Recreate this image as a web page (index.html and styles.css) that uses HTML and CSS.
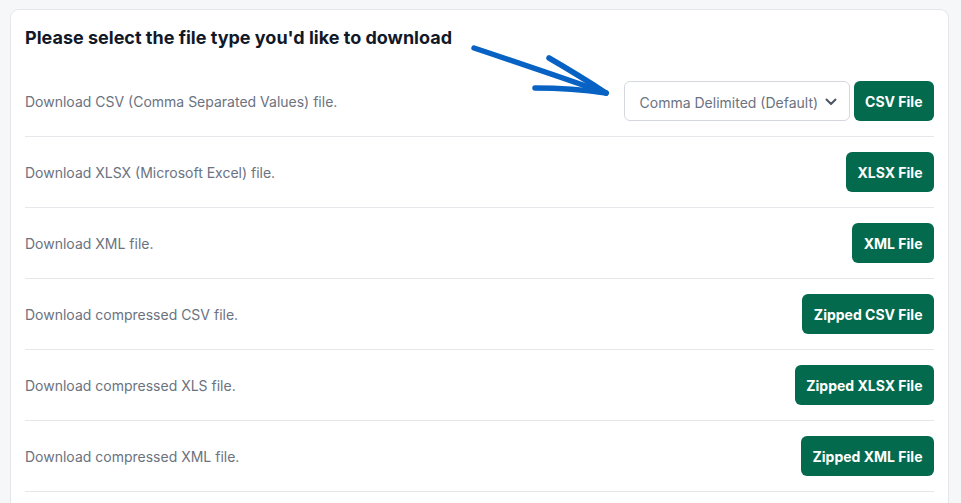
FILE: index.html
```html
<!DOCTYPE html>
<html>
<head>
<meta charset="utf-8">
<link rel="stylesheet" href="styles.css">
</head>
<body>
<div class="card">
  <h2 class="title">Please select the file type you'd like to download</h2>
  <svg class="arrow" width="150" height="60" viewBox="460 40 150 60">
    <g fill="none" stroke="#0762c4" stroke-width="5.5" stroke-linecap="round" stroke-linejoin="round">
      <path d="M474 48 Q540 70 606 93"/>
      <path d="M549 58 Q580 76 606 93"/>
      <path d="M535 88 Q572 88 606 93"/>
    </g>
  </svg>
  <div class="row">
    <span class="label">Download CSV (Comma Separated Values) file.</span>
    <div class="actions">
      <div class="select">
        <span class="select-text">Comma Delimited (Default)</span>
        <svg class="chev" width="12" height="8" viewBox="0 0 12 8"><path d="M1.5 1.5 L6 6 L10.5 1.5" fill="none" stroke="#4b5563" stroke-width="2" stroke-linecap="round" stroke-linejoin="round"/></svg>
      </div>
      <button class="btn">CSV File</button>
    </div>
  </div>
  <div class="row">
    <span class="label">Download XLSX (Microsoft Excel) file.</span>
    <button class="btn">XLSX File</button>
  </div>
  <div class="row">
    <span class="label">Download XML file.</span>
    <button class="btn">XML File</button>
  </div>
  <div class="row">
    <span class="label">Download compressed CSV file.</span>
    <button class="btn">Zipped CSV File</button>
  </div>
  <div class="row">
    <span class="label">Download compressed XLS file.</span>
    <button class="btn">Zipped XLSX File</button>
  </div>
  <div class="row">
    <span class="label">Download compressed XML file.</span>
    <button class="btn">Zipped XML File</button>
  </div>
</div>
</body>
</html>
```
FILE: styles.css
```css
* { box-sizing: border-box; }
html, body { margin: 0; padding: 0; }
body {
  background: #f6f7f9;
  font-family: Inter, "Noto Sans", sans-serif;
  overflow: hidden;
  height: 503px;
}
.card {
  position: relative;
  margin: 9px 12px 0 10px;
  background: #fff;
  border: 1px solid #e4e6ea;
  border-bottom: none;
  border-radius: 9px 9px 0 0;
  padding: 17px 14px 0 14px;
  height: 494px;
  overflow: hidden;
}
.title {
  margin: 0 0 17px 0;
  font-size: 18px;
  line-height: 22px;
  font-weight: 700;
  color: #111827;
}
.arrow {
  position: absolute;
  left: 449px;
  top: 30px;
}
.row {
  display: flex;
  align-items: center;
  justify-content: space-between;
  padding: 15px 0;
  border-bottom: 1px solid #e5e7eb;
  height: 71px;
}
.label {
  font-size: 14px;
  color: #6b7280;
}
.actions {
  display: flex;
  align-items: center;
  gap: 4px;
}
.select {
  display: flex;
  align-items: center;
  justify-content: space-between;
  width: 226px;
  height: 40px;
  border: 1px solid #d4d7dd;
  border-radius: 6px;
  padding: 0 12px 0 15px;
  font-size: 14px;
  color: #6b7280;
}
.select-text { padding-top: 3px; }
.chev { margin-top: 1px; }
.btn {
  height: 40px;
  border: none;
  border-radius: 6px;
  background: #046a4e;
  color: #fff;
  font-family: Inter, "Noto Sans", sans-serif;
  font-size: 14px;
  font-weight: 700;
  padding: 0 11.5px;
}
```
